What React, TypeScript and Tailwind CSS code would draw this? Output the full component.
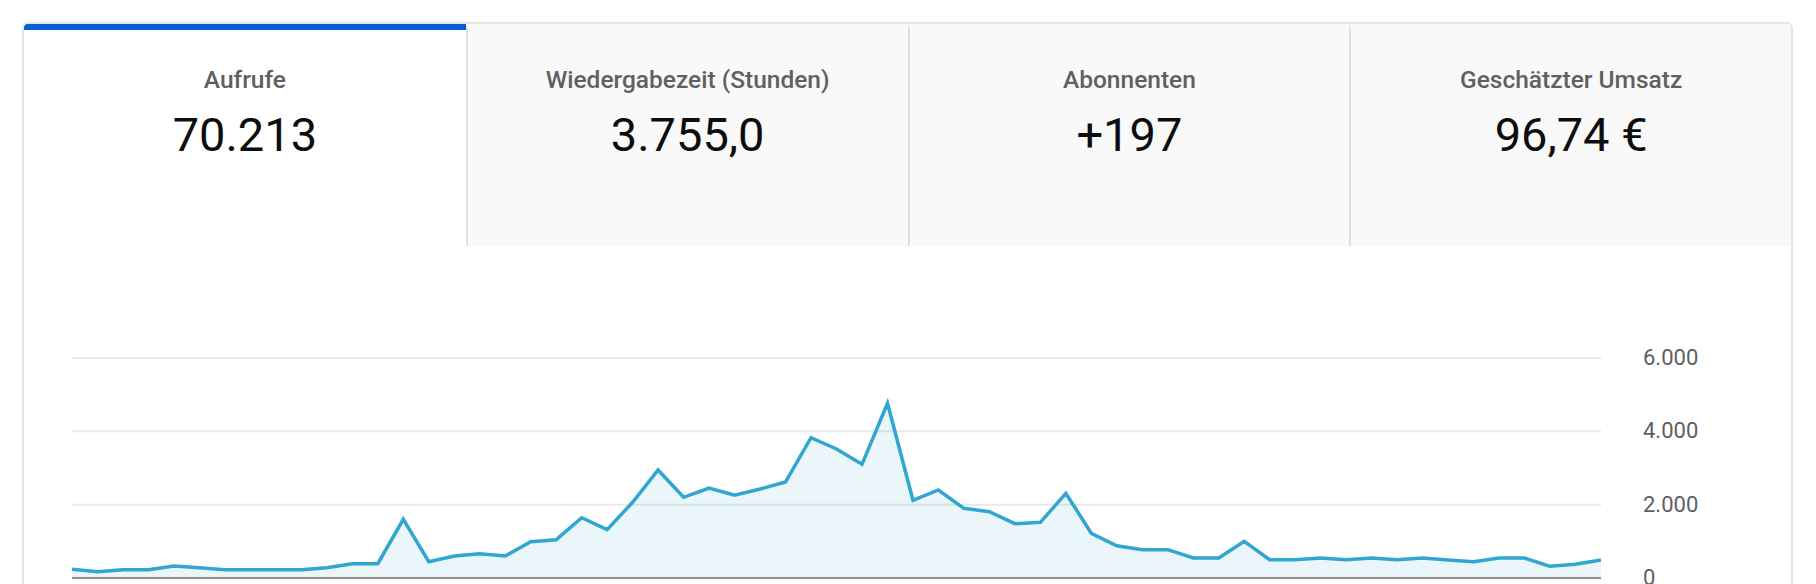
const tabs = [
  { label: 'Aufrufe', value: '70.213', active: true },
  { label: 'Wiedergabezeit (Stunden)', value: '3.755,0', active: false },
  { label: 'Abonnenten', value: '+197', active: false },
  { label: 'Geschätzter Umsatz', value: '96,74 €', active: false },
]

// daily views, read off the chart
const views = [
  237, 173, 227, 227, 327, 282, 227, 227, 227, 227,
  282, 391, 391, 1600, 445, 600, 664, 600, 991, 1045,
  1645, 1318, 2064, 2945, 2200, 2455, 2255, 2427, 2618, 3827,
  3518, 3100, 4764, 2118, 2400, 1900, 1809, 1482, 1520, 2309,
  1218, 882, 773, 773, 545, 545, 1000, 500, 500, 545,
  500, 545, 500, 545, 491, 445, 545, 545, 318, 373,
  491,
]

const W = 1529
const H = 240
const BASE = 230
const TOP = 10

function ViewsChart() {
  const step = W / (views.length - 1)
  const pts = views.map((v, i) => [i * step, BASE - (v / 6000) * (BASE - TOP)])
  const line = pts.map(([x, y], i) => `${i ? 'L' : 'M'}${x.toFixed(1)} ${y.toFixed(1)}`).join(' ')
  const area = `${line} L${W} ${BASE} L0 ${BASE} Z`
  const grid = [TOP, TOP + (BASE - TOP) / 3, TOP + ((BASE - TOP) * 2) / 3]

  return (
    <svg width={W} height={H} viewBox={`0 0 ${W} ${H}`} className="block shrink-0">
      {grid.map(y => (
        <line key={y} x1={0} x2={W} y1={y} y2={y} stroke="#e8e8e8" strokeWidth={2} />
      ))}
      <path d={area} fill="rgba(48,166,208,0.1)" />
      <line x1={0} x2={W} y1={BASE} y2={BASE} stroke="#909090" strokeWidth={2} />
      <path d={line} fill="none" stroke="#30a6d0" strokeWidth={3.5} strokeLinejoin="miter" />
    </svg>
  )
}

export default function App() {
  return (
    <div className="w-full min-h-[584px] bg-white font-[Roboto,sans-serif] pt-[22px]">
      <div className="ml-[22px] mr-[23px] border-2 border-[#e5e5e5] rounded-[6px] overflow-hidden">
        <div className="grid grid-cols-4 h-[222px]">
          {tabs.map(t => (
            <div
              key={t.label}
              className={
                t.active
                  ? 'border-t-[6px] border-[#065fd4] bg-white flex flex-col items-center pt-[36px]'
                  : 'border-t-[6px] border-t-transparent border-l-2 border-l-[#e0e0e0] bg-[#f9f9f9] flex flex-col items-center pt-[36px]'
              }
            >
              <div className="text-[24.5px] leading-[28px] font-medium text-[#606060]">{t.label}</div>
              <div className="mt-[13px] text-[47px] leading-[55px] font-normal text-[#0d0d0d]">{t.value}</div>
            </div>
          ))}
        </div>

        <div className="flex pl-[48px] pt-[102px] h-[400px]">
          <ViewsChart />
          <div className="ml-[42px] h-[240px] flex flex-col justify-between text-[22px] leading-[20px] text-[#606060]">
            <span className="h-[20px]">6.000</span>
            <span className="h-[20px]">4.000</span>
            <span className="h-[20px]">2.000</span>
            <span className="h-[20px]">0</span>
          </div>
        </div>
      </div>
    </div>
  )
}
